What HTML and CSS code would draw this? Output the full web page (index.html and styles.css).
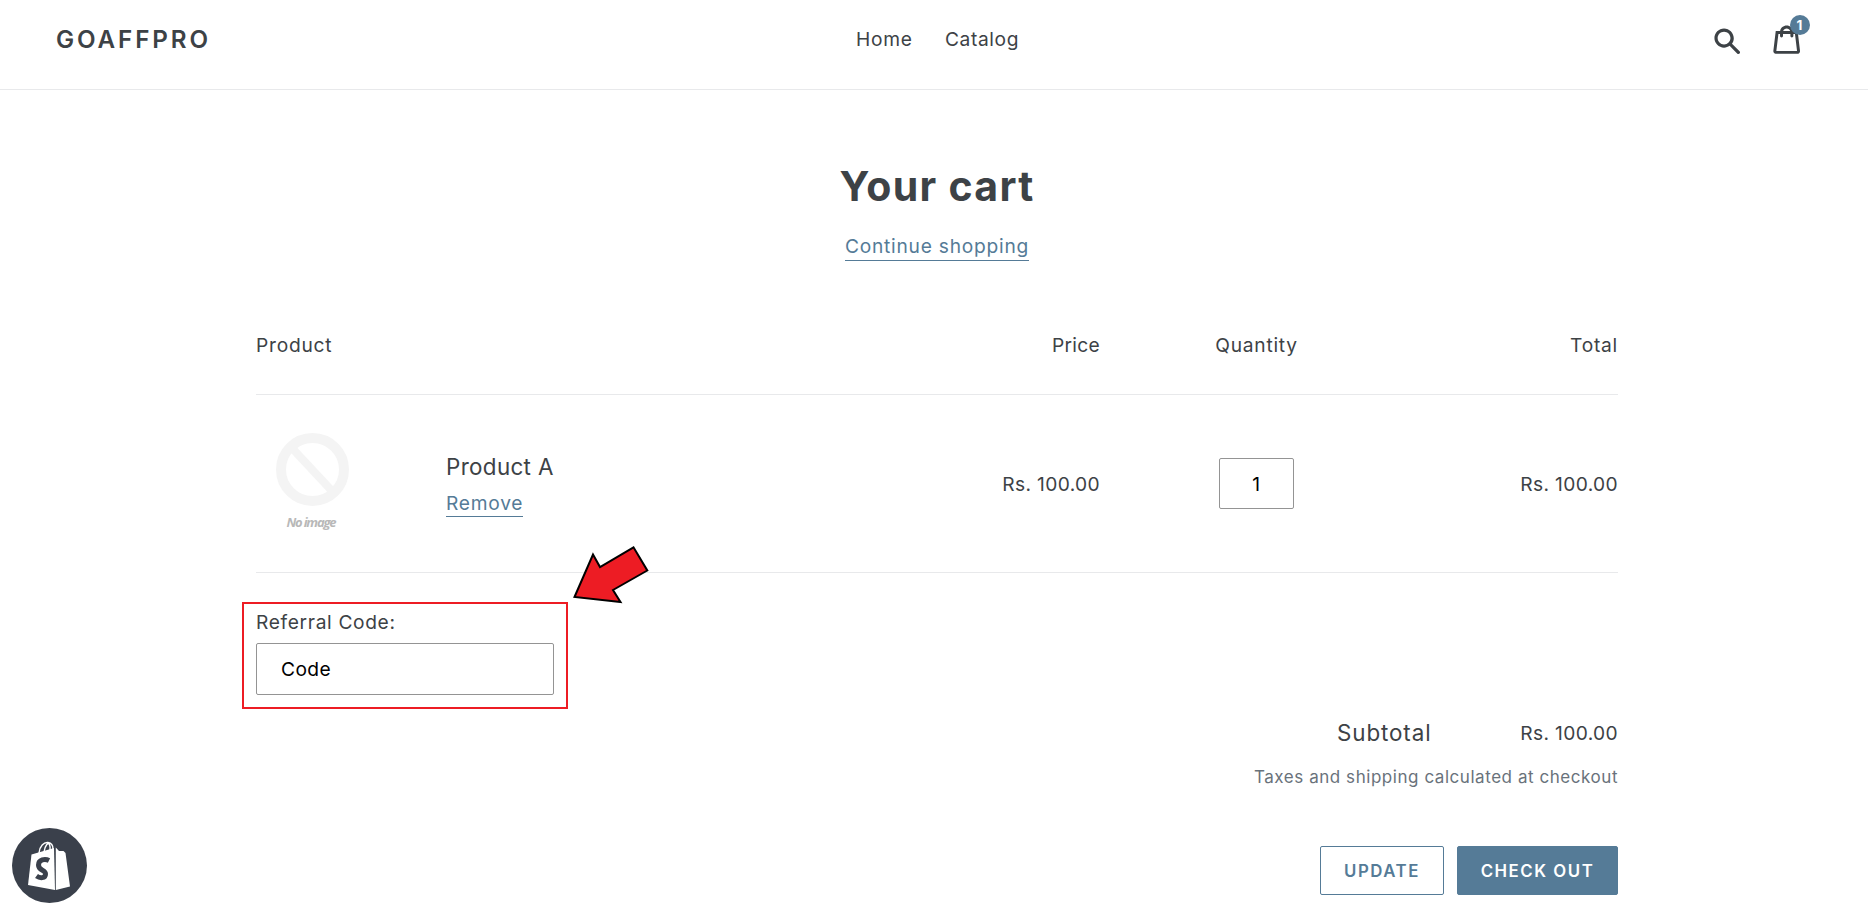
FILE: index.html
```html
<!DOCTYPE html>
<html lang="en">
<head>
<meta charset="utf-8">
<title>Your cart – GOAFFPRO</title>
<link rel="stylesheet" href="styles.css">
</head>
<body>
<header class="site-header">
  <a class="brand">GOAFFPRO</a>
  <nav class="site-nav"><a class="nav-home">Home</a><a class="nav-catalog">Catalog</a></nav>
  <div class="header-icons">
    <svg class="icon-search" viewBox="0 0 20 20"><path d="M18.64 17.02l-5.31-5.31c.81-1.08 1.26-2.43 1.26-3.87C14.5 4.06 11.44 1 7.75 1S1 4.06 1 7.75s3.06 6.75 6.75 6.75c1.44 0 2.79-.45 3.87-1.26l5.31 5.31c.45.45 1.26.54 1.71.09.45-.36.45-1.17 0-1.62zM3.25 7.75c0-2.52 1.98-4.5 4.5-4.5s4.5 1.98 4.5 4.5-1.98 4.5-4.5 4.5-4.5-1.98-4.5-4.5z"/></svg>
    <div class="cart-link">
      <svg class="icon-cart" viewBox="0 0 37 40"><path d="M36.5 34.8L33.3 8h-5.9C26.7 3.9 23 .8 18.5.8S10.3 3.9 9.6 8H3.7L.5 34.8c-.2 1.5.4 2.4.9 3 .5.5 1.4 1.2 3.1 1.2h28c1.3 0 2.4-.4 3.1-1.3.7-.7 1-1.8.9-2.9zm-18-30c2.2 0 4.1 1.4 4.7 3.2h-9.5c.7-1.9 2.6-3.2 4.8-3.2zM4.5 35l2.8-23h2.2v3c0 1.1.9 2 2 2s2-.9 2-2v-3h10v3c0 1.1.9 2 2 2s2-.9 2-2v-3h2.2l2.8 23h-28z"/></svg>
      <span class="cart-count">1</span>
    </div>
  </div>
</header>
<main class="cart">
  <div class="cart-head">
    <h1 class="title">Your cart</h1>
    <a class="link continue">Continue shopping</a>
  </div>
  <div class="row row-head">
    <span class="col-product">Product</span>
    <span class="col-price price-label">Price</span>
    <span class="col-qty">Quantity</span>
    <span class="col-total total-label">Total</span>
  </div>
  <div class="row row-item">
    <svg class="thumb" viewBox="0 0 112 112">
      <circle cx="56.500" cy="48.500" r="31.500" fill="none" stroke="#f4f4f4" stroke-width="10"/>
      <path d="M35 26l42 45" stroke="#f4f4f4" stroke-width="8"/>
      <text x="30.500" y="106" class="thumb-text" textLength="50" lengthAdjust="spacing">No image</text>
    </svg>
    <div class="item-info">
      <span class="item-name">Product A</span>
      <a class="link remove">Remove</a>
    </div>
    <span class="col-price money">Rs. 100.00</span>
    <span class="col-qty"><input class="field qty" value="1"></span>
    <span class="col-total money">Rs. 100.00</span>
  </div>
  <section class="referral">
    <label class="referral-label" for="code">Referral Code:</label>
    <input class="field code" id="code" value="Code">
    <svg class="arrow" viewBox="570 540 84 68"><path d="M574.500 597L593 554.500L600 567L633.500 547.300L647.300 570.500L613 590L620.500 602Z"/></svg>
  </section>
  <footer class="cart-footer">
    <div class="subtotal"><span class="subtotal-label">Subtotal</span><span class="money">Rs. 100.00</span></div>
    <div class="taxes">Taxes and shipping calculated at checkout</div>
    <div class="actions"><button class="btn btn-update">UPDATE</button><button class="btn btn-checkout">CHECK OUT</button></div>
  </footer>
</main>
<svg class="shop-badge" viewBox="0 0 75 75">
  <circle cx="37.500" cy="37.500" r="37.500" fill="#3a404b"/>
  <path d="M19.500 26.500L42 20L43 62L16 57Z" fill="#fff"/>
  <path d="M43.800 19.500L47 23H51.500L53.500 25L58 58.500L43.800 62Z" fill="#fff"/>
  <path d="M27 25C27.500 18 32 14 36 14.500C39.500 15 41 18 41 21M32 24C33 17 36 14.500 38 15.500M35.500 15C39 16 38 21 38 22" fill="none" stroke="#fff" stroke-width="1.400"/>
  <path d="M37 32.500C33 30.500 26.500 31.500 26.500 37C26.500 43 33.500 41.500 33.500 46C33.500 50.500 28 50.500 24.500 48" fill="none" stroke="#3a404b" stroke-width="5"/>
</svg>
</body>
</html>
```
FILE: styles.css
```css
* { box-sizing: border-box; }
body {
  margin: 0;
  height: 912px;
  overflow: hidden;
  background: #fff;
  color: #3d4246;
  font: 400 19.2px/30px Inter, "Liberation Sans", sans-serif;
  letter-spacing: 0.75px;
}
.site-header {
  height: 90px;
  border-bottom: 1px solid #e8e9eb;
  display: grid;
  grid-template-columns: 800px 1fr 158px;
  padding-left: 56px;
}
.brand { font-size: 24.2px; font-weight: 600; letter-spacing: 2.9px; padding-top: 25px; }
.site-nav { display: flex; padding-top: 24px; }
.nav-home { width: 89px; }
.nav-catalog { letter-spacing: 0.6px; }
.header-icons { display: flex; align-items: flex-start; fill: #3d4246; }
.icon-search { width: 28.5px; height: 28.5px; margin: 27px 0 0 3px; }
.cart-link { position: relative; margin: 25px 0 0 31px; }
.icon-cart { display: block; width: 27.4px; height: 29.6px; }
.cart-count {
  position: absolute;
  left: 17px;
  top: -10px;
  width: 20px;
  height: 20px;
  border-radius: 50%;
  background: #557b97;
  color: #fff;
  font-size: 13.5px;
  font-weight: 700;
  line-height: 20px;
  letter-spacing: 0;
  text-align: center;
}
.cart { margin-left: 256px; width: 1362px; }
.cart-head { display: flex; flex-direction: column; align-items: center; padding-top: 72px; height: 235px; }
.title { margin: 0; font-size: 41px; line-height: 48px; font-weight: 700; letter-spacing: 1.3px; }
.link { color: #557b97; border-bottom: 1px solid #557b97; }
.continue { margin-top: 23px; line-height: 27px; }
.row { display: grid; grid-template-columns: 190px 464px 190px 313px 205px; border-bottom: 1px solid #e8e9eb; }
.row-head { height: 70px; padding-top: 5px; }
.row-head .col-product { grid-column: 1 / 3; }
.col-price, .col-total { text-align: right; }
.col-qty { text-align: center; }
.price-label { letter-spacing: 0.3px; }
.row-item { height: 178px; align-items: center; }
.thumb { width: 112px; height: 112px; align-self: start; margin-top: 26px; }
.thumb-text { font: italic 700 13px "Open Sans", sans-serif; letter-spacing: 0; fill: #b8b8b8; }
.item-info { display: flex; flex-direction: column; align-items: flex-start; }
.item-name { font-size: 22.4px; letter-spacing: 0.35px; padding-top: 1px; }
.remove { line-height: 26px; margin-top: 8px; }
.money { letter-spacing: 0.35px; }
.field {
  display: block;
  border: 1px solid #949494;
  border-radius: 2px;
  background: #fff;
  color: #000;
  font: inherit;
  letter-spacing: inherit;
}
.qty { width: 75px; height: 51px; margin: 0 auto; padding: 0; text-align: center; }
.referral {
  position: relative;
  width: 326px;
  height: 107px;
  margin: 29px 0 0 -14px;
  padding: 3px 12px;
  border: 2px solid #ed1c24;
}
.referral-label { display: block; height: 36px; letter-spacing: 0.65px; }
.code { width: 298px; height: 52px; padding: 0 24px; letter-spacing: 0.4px; }
.arrow {
  position: absolute;
  left: 326px;
  top: -64px;
  width: 84px;
  height: 68px;
  fill: #ed1c24;
  stroke: #000;
  stroke-width: 2;
}
.cart-footer { display: flex; flex-direction: column; align-items: flex-end; padding-top: 9px; }
.subtotal { display: flex; justify-content: space-between; width: 281px; }
.subtotal-label { font-size: 22.4px; letter-spacing: 0.9px; }
.taxes { font-size: 17px; color: #69727b; margin-top: 14px; letter-spacing: 0.55px; }
.actions { display: flex; gap: 13px; margin-top: 54px; }
.btn {
  height: 49px;
  padding: 0;
  border: 1px solid #557b97;
  border-radius: 2px;
  font: 600 16.8px/20px Inter, sans-serif;
  letter-spacing: 1.55px;
}
.btn-update { width: 124px; color: #557b97; background: #fff; }
.btn-checkout { width: 161px; color: #fff; background: #557b97; }
.shop-badge { position: fixed; left: 12px; top: 828px; width: 75px; height: 75px; }
```
